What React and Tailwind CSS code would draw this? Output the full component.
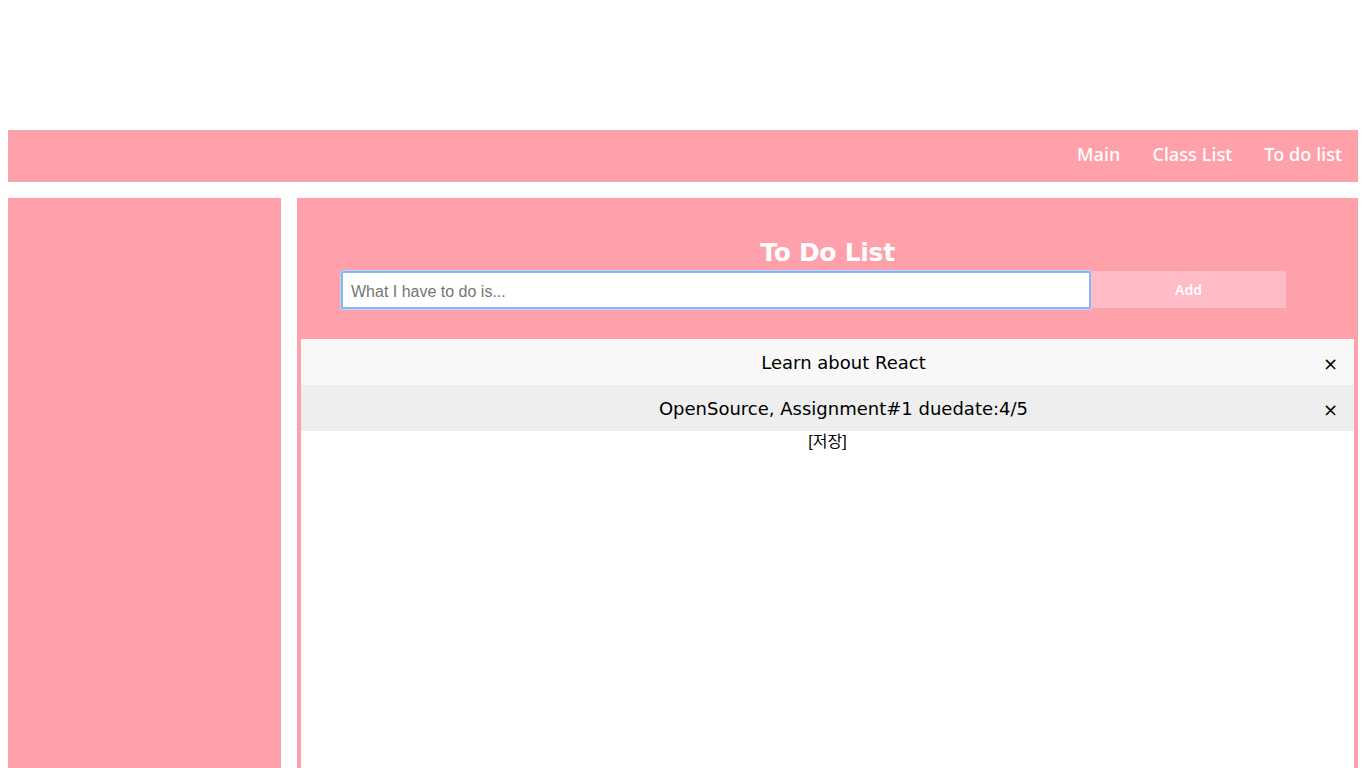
import { useState } from 'react';

const items = ['Learn about React', 'OpenSource, Assignment#1 duedate:4/5'];

export default function App() {
  const [todos] = useState(items);

  return (
    <div className="min-h-screen bg-white pt-[130px] px-2">
      <nav className="h-[52px] bg-[#ffa1ab] flex items-center justify-end pr-4 pb-[3px] gap-8 text-white text-[18px] font-medium font-['Noto_Sans',sans-serif]">
        <a href="#" className="tracking-[0.1px]">Main</a>
        <a href="#" className="tracking-[0.1px]">Class List</a>
        <a href="#" className="tracking-[0.1px]">To do list</a>
      </nav>
      <div className="mt-4 flex gap-4 min-h-[570px]">
        <aside className="w-[273px] bg-[#ffa1ab]"></aside>
        <main className="flex-1 bg-[#ffa1ab] px-1 flex flex-col">
          <div className="h-[141px] pt-[39px]">
            <h1 className="text-center text-white font-bold text-[25px] leading-[32px] font-['DejaVu_Sans',Verdana,sans-serif] tracking-[-0.3px]">To Do List</h1>
            <div className="flex ml-[40px] mt-[2px]">
              <input
                className="w-[750px] h-[38px] bg-white border-2 border-[#8ab4f8] ring-1 ring-[#bcd4fb] rounded-[2px] px-2 pt-[3px] text-[16px] text-gray-700 placeholder-[#757575] outline-none font-['Liberation_Sans',Arial,sans-serif]"
                placeholder="What I have to do is..."
              />
              <button className="w-[195px] h-[37px] bg-[#ffbbc6] text-white text-[14px] font-semibold font-['Noto_Sans',sans-serif]">Add</button>
            </div>
          </div>
          <div className="flex-1 bg-white font-['DejaVu_Sans',Verdana,sans-serif]">
            {todos.map((t, i) => (
              <div
                key={t}
                className={`h-[46px] flex items-center relative text-[18px] text-black pt-[1px] ${i % 2 === 0 ? 'bg-[#f8f8f8]' : 'bg-[#eeeeee]'}`}
              >
                <span className="flex-1 text-center pl-8">{t}</span>
                <span className="absolute right-[16px] top-[11px] text-[18px]">×</span>
              </div>
            ))}
            <div className="text-center text-[16px] text-black font-['Liberation_Sans','Noto_Sans_CJK_KR',sans-serif] leading-[20px] mt-[1px]">[저장]</div>
          </div>
        </main>
      </div>
    </div>
  );
}
